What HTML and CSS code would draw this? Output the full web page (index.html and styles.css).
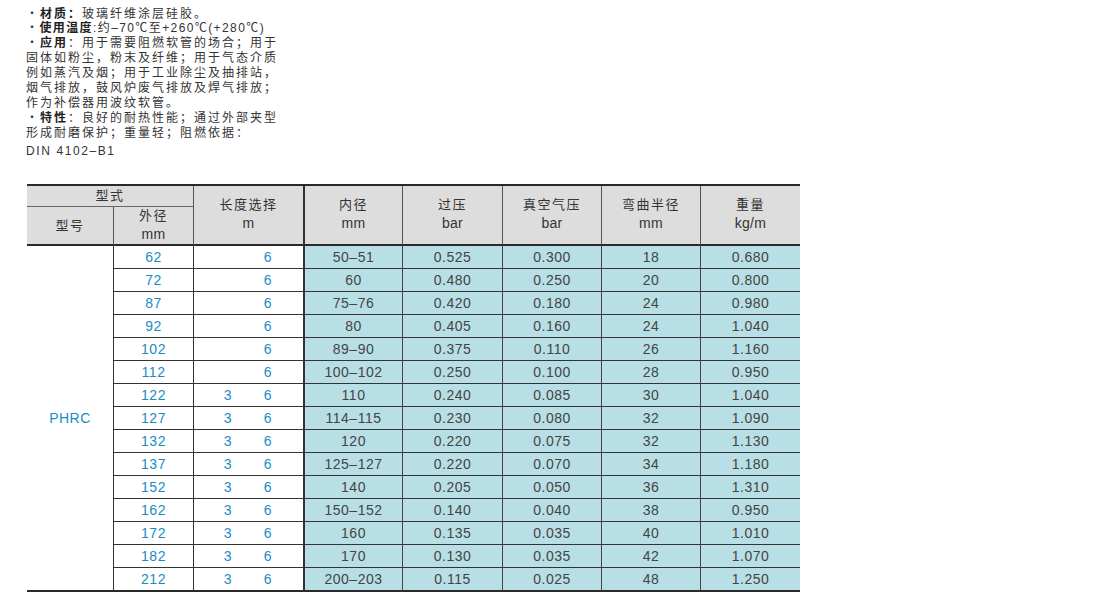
FILE: index.html
```html
<!DOCTYPE html>
<html lang="zh-CN">
<head>
<meta charset="utf-8">
<title>PHRC</title>
<link rel="stylesheet" href="styles.css">
</head>
<body>
<div class="intro">
  <div class="line first">・<b>材质：</b>玻璃纤维涂层硅胶。</div>
  <div class="line tight">・<b>使用温度</b>:约–70℃至+260℃(+280℃)</div>
  <div class="line">・<b>应用</b>：用于需要阻燃软管的场合；用于</div>
  <div class="line">固体如粉尘，粉末及纤维；用于气态介质</div>
  <div class="line">例如蒸汽及烟；用于工业除尘及抽排站，</div>
  <div class="line">烟气排放，鼓风炉废气排放及焊气排放；</div>
  <div class="line">作为补偿器用波纹软管。</div>
  <div class="line">・<b>特性</b>：良好的耐热性能；通过外部夹型</div>
  <div class="line">形成耐磨保护；重量轻；阻燃依据：</div>
  <div class="line din">DIN 4102–B1</div>
</div>

<table class="spec">
  <colgroup>
    <col class="c1"><col class="c2"><col class="c3"><col class="c4"><col class="c5"><col class="c6"><col class="c7"><col class="c8">
  </colgroup>
  <thead>
    <tr class="h1">
      <th colspan="2" class="group">型式</th>
      <th rowspan="2" class="span vl">长度选择<br><span class="u">m</span></th>
      <th rowspan="2" class="span vl2">内径<br><span class="u">mm</span></th>
      <th rowspan="2" class="span vl">过压<br><span class="u">bar</span></th>
      <th rowspan="2" class="span vl">真空气压<br><span class="u">bar</span></th>
      <th rowspan="2" class="span vl">弯曲半径<br><span class="u">mm</span></th>
      <th rowspan="2" class="span vl">重量<br><span class="u">kg/m</span></th>
    </tr>
    <tr class="h2">
      <th class="sub">型号</th>
      <th class="sub vl">外径<br><span class="u">mm</span></th>
    </tr>
  </thead>
  <tbody>
    <tr><td rowspan="15" class="model">PHRC</td><td class="od">62</td><td class="len"><span></span><span>6</span></td><td class="cy vl2">50–51</td><td class="cy">0.525</td><td class="cy">0.300</td><td class="cy">18</td><td class="cy">0.680</td></tr>
    <tr><td class="od">72</td><td class="len"><span></span><span>6</span></td><td class="cy vl2">60</td><td class="cy">0.480</td><td class="cy">0.250</td><td class="cy">20</td><td class="cy">0.800</td></tr>
    <tr><td class="od">87</td><td class="len"><span></span><span>6</span></td><td class="cy vl2">75–76</td><td class="cy">0.420</td><td class="cy">0.180</td><td class="cy">24</td><td class="cy">0.980</td></tr>
    <tr><td class="od">92</td><td class="len"><span></span><span>6</span></td><td class="cy vl2">80</td><td class="cy">0.405</td><td class="cy">0.160</td><td class="cy">24</td><td class="cy">1.040</td></tr>
    <tr><td class="od">102</td><td class="len"><span></span><span>6</span></td><td class="cy vl2">89–90</td><td class="cy">0.375</td><td class="cy">0.110</td><td class="cy">26</td><td class="cy">1.160</td></tr>
    <tr><td class="od">112</td><td class="len"><span></span><span>6</span></td><td class="cy vl2">100–102</td><td class="cy">0.250</td><td class="cy">0.100</td><td class="cy">28</td><td class="cy">0.950</td></tr>
    <tr><td class="od">122</td><td class="len"><span>3</span><span>6</span></td><td class="cy vl2">110</td><td class="cy">0.240</td><td class="cy">0.085</td><td class="cy">30</td><td class="cy">1.040</td></tr>
    <tr><td class="od">127</td><td class="len"><span>3</span><span>6</span></td><td class="cy vl2">114–115</td><td class="cy">0.230</td><td class="cy">0.080</td><td class="cy">32</td><td class="cy">1.090</td></tr>
    <tr><td class="od">132</td><td class="len"><span>3</span><span>6</span></td><td class="cy vl2">120</td><td class="cy">0.220</td><td class="cy">0.075</td><td class="cy">32</td><td class="cy">1.130</td></tr>
    <tr><td class="od">137</td><td class="len"><span>3</span><span>6</span></td><td class="cy vl2">125–127</td><td class="cy">0.220</td><td class="cy">0.070</td><td class="cy">34</td><td class="cy">1.180</td></tr>
    <tr><td class="od">152</td><td class="len"><span>3</span><span>6</span></td><td class="cy vl2">140</td><td class="cy">0.205</td><td class="cy">0.050</td><td class="cy">36</td><td class="cy">1.310</td></tr>
    <tr><td class="od">162</td><td class="len"><span>3</span><span>6</span></td><td class="cy vl2">150–152</td><td class="cy">0.140</td><td class="cy">0.040</td><td class="cy">38</td><td class="cy">0.950</td></tr>
    <tr><td class="od">172</td><td class="len"><span>3</span><span>6</span></td><td class="cy vl2">160</td><td class="cy">0.135</td><td class="cy">0.035</td><td class="cy">40</td><td class="cy">1.010</td></tr>
    <tr><td class="od">182</td><td class="len"><span>3</span><span>6</span></td><td class="cy vl2">170</td><td class="cy">0.130</td><td class="cy">0.035</td><td class="cy">42</td><td class="cy">1.070</td></tr>
    <tr class="last"><td class="od">212</td><td class="len"><span>3</span><span>6</span></td><td class="cy vl2">200–203</td><td class="cy">0.115</td><td class="cy">0.025</td><td class="cy">48</td><td class="cy">1.250</td></tr>
  </tbody>
</table>
</body>
</html>
```

FILE: styles.css
```css
html, body {
  margin: 0;
  padding: 0;
  background: #ffffff;
}

body {
  font-family: "Liberation Sans", "Noto Sans CJK SC", sans-serif;
  color: #3a3a3a;
}

.intro {
  padding: 8px 0 0 26px;
  font-size: 12px;
  letter-spacing: 2px;
  color: #333333;
}

.intro .line {
  line-height: 15px;
  white-space: nowrap;
}

.intro .line.first {
  line-height: 13px;
}

.intro .line.tight {
  letter-spacing: 1.4px;
}

.intro .line.din {
  letter-spacing: 1.6px;
  margin-top: 3px;
}

.intro b {
  font-weight: bold;
  color: #222222;
}

.spec {
  margin: 25px 0 0 27px;
  border-collapse: separate;
  border-spacing: 0;
  table-layout: fixed;
  width: 773px;
  border-top: 2px solid #2a2a2a;
}

.c1 { width: 86px; }
.c2 { width: 80px; }
.c3 { width: 110px; }
.c4 { width: 99px; }
.c5 { width: 100px; }
.c6 { width: 99px; }
.c7 { width: 99px; }
.c8 { width: 100px; }

.spec th {
  background: #dddddd;
  font-weight: normal;
  color: #333333;
  font-size: 13px;
  letter-spacing: 1.5px;
  padding: 0;
  text-align: center;
  vertical-align: middle;
}

.spec th .u {
  font-size: 14px;
  letter-spacing: 0.3px;
}

.spec .h1 th {
  line-height: 20px;
}

.spec th.group {
  border-bottom: 1px solid #666666;
}

.spec th.span {
  line-height: 18px;
  padding-bottom: 2px;
  border-bottom: 2px solid #2a2a2a;
}

.spec .h2 th {
  line-height: 18px;
  height: 38px;
  box-sizing: border-box;
  padding: 0;
  border-bottom: 2px solid #2a2a2a;
}

.spec .vl {
  border-left: 1px solid #555555;
}

.spec .vl2 {
  border-left: 2px solid #333333;
}

.spec td {
  padding: 0;
  line-height: 22px;
  font-size: 14px;
  letter-spacing: 0.5px;
  text-align: center;
  color: #444444;
  border-bottom: 1px solid #333333;
  background: #ffffff;
}

.spec td.model {
  color: #1a8cc4;
  border-bottom: 2px solid #2a2a2a;
  vertical-align: middle;
}

.spec td.od {
  color: #1a8cc4;
  border-left: 1px solid #333333;
}

.spec td.len {
  color: #1a8cc4;
  border-left: 1px solid #333333;
  text-align: left;
}

.spec td.len span {
  display: inline-block;
  width: 40px;
  text-align: center;
}

.spec td.len span:first-child {
  margin-left: 14px;
}

.spec td.cy {
  background: #b8dfe5;
  border-left: 1px solid #444444;
}

.spec td.cy.vl2 {
  border-left: 2px solid #333333;
}

.spec tr.last td {
  border-bottom: 2px solid #2a2a2a;
}
```
